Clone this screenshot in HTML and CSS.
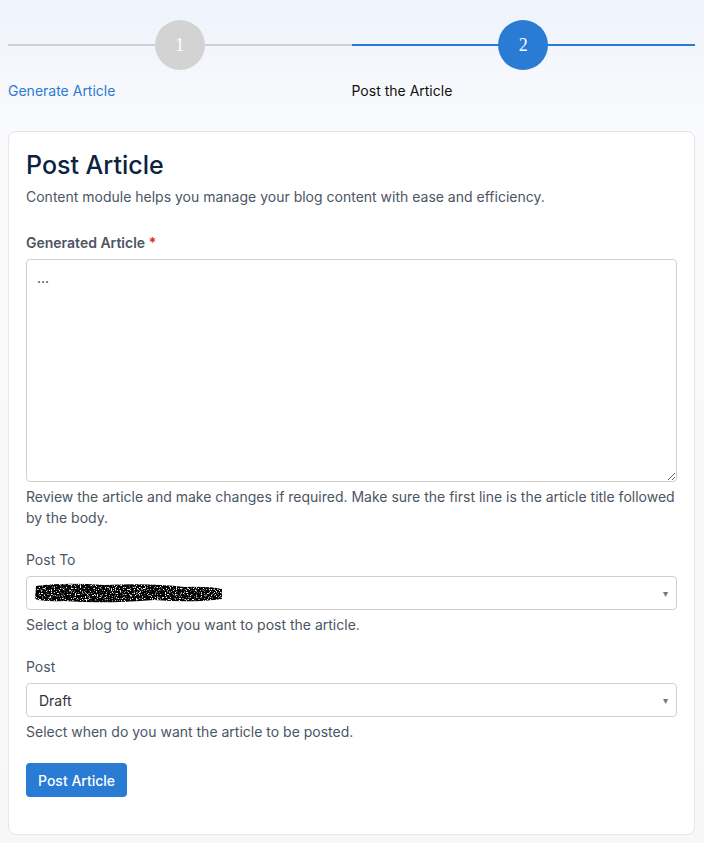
FILE: index.html
```html
<!DOCTYPE html>
<html lang="en">
  <head>
    <meta charset="UTF-8" />
    <meta name="viewport" content="width=device-width, initial-scale=1.0" />
    <link rel="stylesheet" href="styles.css">
    <title>Post Article</title>
  </head>

  <body>
    <div class="page">
      <div class="steps">
        <div class="step done">
          <div class="track"><span class="dot">1</span></div>
          <div class="step-label">Generate Article</div>
        </div>
        <div class="step active">
          <div class="track"><span class="dot">2</span></div>
          <div class="step-label">Post the Article</div>
        </div>
      </div>

      <div class="card">
        <h2>Post Article</h2>
        <p class="intro">Content module helps you manage your blog content with ease and efficiency.</p>

        <form id="postForm">
          <div class="field">
            <label class="strong" for="article">Generated Article <span class="req">*</span></label>
            <textarea id="article" name="article">...</textarea>
            <div class="help">Review the article and make changes if required. Make sure the first line is the article title followed by the body.</div>
          </div>

          <div class="field">
            <label for="blog">Post To</label>
            <div class="select" id="blog">
              <svg class="redacted" width="190" height="22" viewBox="0 0 190 22">
                <defs>
                  <filter id="noise" x="0" y="0" width="100%" height="100%">
                    <feTurbulence type="fractalNoise" baseFrequency="0.8" numOctaves="2" seed="7" />
                    <feColorMatrix type="matrix" values="0 0 0 0 0  0 0 0 0 0  0 0 0 0 0  0 0 0 -6 4.3" />
                    <feComposite in2="SourceGraphic" operator="in" />
                  </filter>
                </defs>
                <path d="M2 4 Q30 0 70 3 Q120 1 150 5 Q175 4 188 7 L188 17 Q160 21 120 18 Q70 22 30 19 Q10 20 1 17 Z" fill="#000" filter="url(#noise)" />
              </svg>
              <span class="caret">&#9662;</span>
            </div>
            <div class="help">Select a blog to which you want to post the article.</div>
          </div>

          <div class="field">
            <label for="when">Post</label>
            <div class="select" id="when">
              <span>Draft</span>
              <span class="caret">&#9662;</span>
            </div>
            <div class="help">Select when do you want the article to be posted.</div>
          </div>

          <button type="submit">Post Article</button>
        </form>
      </div>
    </div>
  </body>
</html>
```

FILE: styles.css
```css
body {
  margin: 0;
  font-family: Inter, "Liberation Sans", Arial, sans-serif;
  background: linear-gradient(#eef3fc 0, #f9fafc 120px, #f6f7f9 100%);
  min-height: 843px;
}

.page {
  padding: 20px 9px 8px 8px;
}

.steps {
  display: grid;
  grid-template-columns: 1fr 1fr;
}

.track {
  height: 50px;
  display: flex;
  justify-content: center;
  background: linear-gradient(#d0d0d0, #d0d0d0) center / 100% 2px no-repeat;
}

.active .track {
  background-image: linear-gradient(#2a7bd4, #2a7bd4);
}

.dot {
  width: 50px;
  height: 50px;
  border-radius: 50%;
  background-color: #d3d3d3;
  color: #fff;
  font-family: "Liberation Serif", serif;
  font-size: 18px;
  display: flex;
  align-items: center;
  justify-content: center;
}

.active .dot {
  background-color: #2a7bd4;
}

.step-label {
  margin-top: 11px;
  font-size: 14px;
  line-height: 20px;
  color: #111;
}

.done .step-label {
  color: #2a7bd4;
}

.card {
  margin-top: 30px;
  background-color: #fff;
  border: 1px solid #e3e6ea;
  border-radius: 8px;
  padding: 17px 17px 37px 17px;
}

h2 {
  margin: 0;
  font-size: 25px;
  font-weight: 500;
  line-height: 32px;
  color: #0c2340;
}

.intro {
  margin: 6px 0 25px;
  font-size: 14px;
  line-height: 20px;
  color: #4b5563;
}

.field {
  margin-bottom: 21px;
}

label {
  display: block;
  margin-bottom: 6px;
  font-size: 14px;
  line-height: 21px;
  color: #4b5563;
}

label.strong {
  font-weight: 600;
}

.req {
  color: #e02424;
}

textarea {
  display: block;
  box-sizing: border-box;
  width: 100%;
  height: 223px;
  padding: 9px 10px;
  border: 1px solid #cfcfcf;
  border-radius: 4px;
  font-family: Inter, "Liberation Sans", sans-serif;
  font-size: 14px;
  color: #333;
  resize: vertical;
}

.select {
  box-sizing: border-box;
  height: 34px;
  border: 1px solid #cfcfcf;
  border-radius: 4px;
  padding: 0 8px 0 12px;
  display: flex;
  align-items: center;
  justify-content: space-between;
  font-size: 14px;
  color: #333;
}

.redacted {
  margin-left: -5px;
}

.caret {
  font-size: 10px;
  color: #777;
}

.help {
  margin-top: 4px;
  font-size: 14px;
  line-height: 21px;
  color: #4b5563;
}

button {
  height: 34px;
  padding: 0 12px;
  background-color: #2a7bd4;
  color: #fff;
  border: none;
  border-radius: 4px;
  font-family: Inter, "Liberation Sans", sans-serif;
  font-size: 14px;
  font-weight: 500;
  cursor: pointer;
}

button:hover {
  background-color: #2168b8;
}
```
